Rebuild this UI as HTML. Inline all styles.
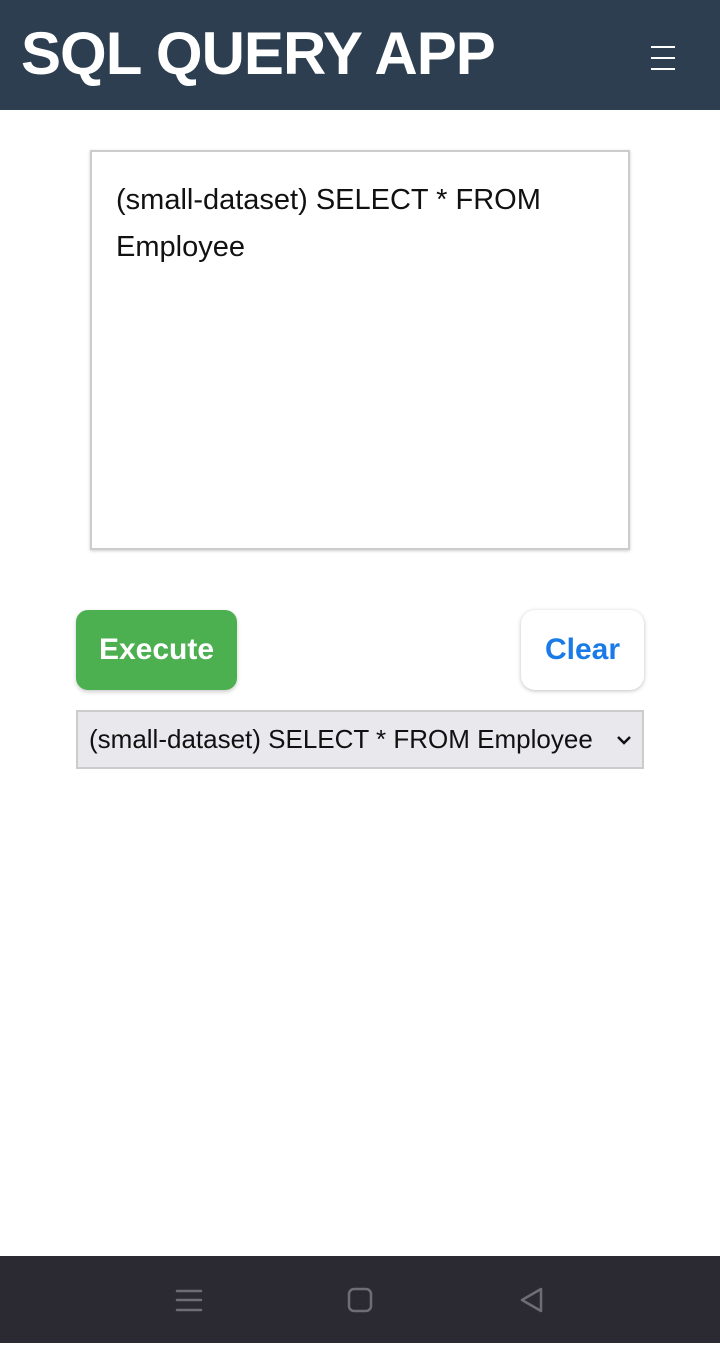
<!DOCTYPE html>
<html><head><style>
*{box-sizing:border-box;margin:0;padding:0}
body{width:720px;height:1343px;position:relative;background:#fff;font-family:"Liberation Sans",sans-serif;overflow:hidden}
.hdr{position:absolute;left:0;top:0;width:720px;height:110px;background:#2c3e50}
.title{position:absolute;left:21px;top:18px;color:#fff;font-weight:bold;font-size:60px;letter-spacing:-1px;line-height:72px}
.hm{position:absolute;left:651px;width:24px;height:2px;background:#fff}
.ta{position:absolute;left:90px;top:150px;width:540px;height:400px;border:2px solid #ccc;box-shadow:0 1px 3px rgba(0,0,0,.2);padding:25px 24px;font-size:29px;line-height:47px;color:#111}
.ex{position:absolute;left:76px;top:610px;width:161px;height:80px;background:#4caf50;border-radius:12px;color:#fff;font-size:30px;font-weight:bold;text-align:center;line-height:80px;box-shadow:0 2px 4px rgba(0,0,0,.2)}
.cl{position:absolute;left:521px;top:610px;width:123px;height:80px;background:#fff;border-radius:14px;color:#1a7be8;font-size:30px;font-weight:bold;text-align:center;line-height:80px;box-shadow:0 1px 4px rgba(0,0,0,.25)}
.sel{position:absolute;left:76px;top:710px;width:568px;height:59px;background:#e8e8ed;border:2px solid #ccc;font-size:26px;line-height:55px;padding-left:11px;color:#111}
.nav{position:absolute;left:0;top:1256px;width:720px;height:87px;background:#2b2a33}
</style></head><body>
<div class="hdr"><div class="title">SQL QUERY APP</div>
<div class="hm" style="top:46px"></div><div class="hm" style="top:57px"></div><div class="hm" style="top:68px"></div></div>
<div class="ta">(small-dataset) SELECT * FROM Employee</div>
<div class="ex">Execute</div>
<div class="cl">Clear</div>
<div class="sel">(small-dataset) SELECT * FROM Employee
<svg style="position:absolute;left:538px;top:22px" width="16" height="12" viewBox="0 0 16 12"><path d="M2 3l6 6 6-6" stroke="#111" stroke-width="2.5" fill="none"/></svg></div>
<div class="nav"><svg width="720" height="87">
<g stroke="#6e6d75" stroke-width="2.5" fill="none" stroke-linecap="round">
<path d="M177 35h24M177 44h24M177 54h24"/>
<rect x="349" y="33" width="22" height="22" rx="5"/>
<path d="M541 33v22l-19-11z" stroke-linejoin="round"/>
</g></svg></div>
</body></html>
